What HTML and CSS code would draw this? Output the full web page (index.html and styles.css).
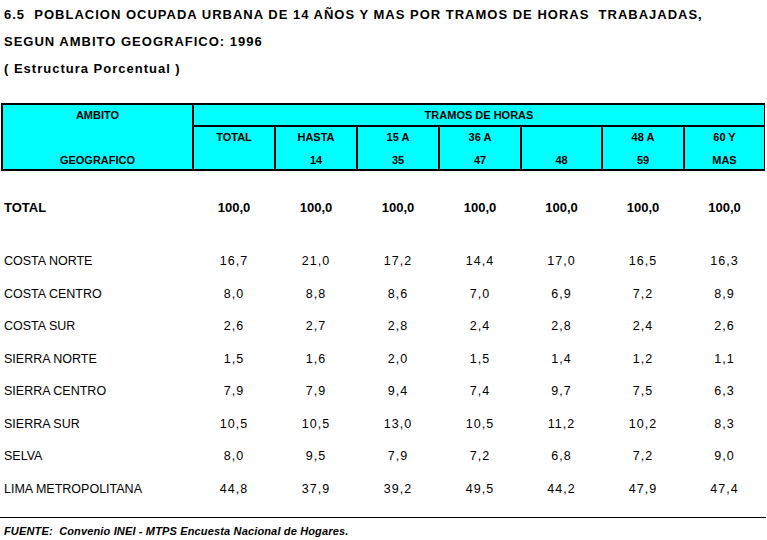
FILE: index.html
```html
<!DOCTYPE html>
<html lang="es">
<head>
<meta charset="utf-8">
<title>Poblacion ocupada urbana</title>
<link rel="stylesheet" href="styles.css">
</head>
<body>
<div class="titles">
  <div class="title-line">6.5  POBLACION OCUPADA URBANA DE 14 AÑOS Y MAS POR TRAMOS DE HORAS  TRABAJADAS,</div>
  <div class="title-line">SEGUN AMBITO GEOGRAFICO: 1996</div>
  <div class="title-line">( Estructura Porcentual )</div>
</div>

<div class="head">
  <div class="hcell ambito"><span>AMBITO</span><span>GEOGRAFICO</span></div>
  <div class="hcell tramos">TRAMOS DE HORAS</div>
  <div class="hcell two"><span>TOTAL</span><span>&nbsp;</span></div>
  <div class="hcell two"><span>HASTA</span><span>14</span></div>
  <div class="hcell two"><span>15 A</span><span>35</span></div>
  <div class="hcell two"><span>36 A</span><span>47</span></div>
  <div class="hcell two"><span>&nbsp;</span><span>48</span></div>
  <div class="hcell two"><span>48 A</span><span>59</span></div>
  <div class="hcell two"><span>60 Y</span><span>MAS</span></div>
</div>

<div class="body">
  <div class="row total">
    <div class="label">TOTAL</div>
    <div class="num">100,0</div><div class="num">100,0</div><div class="num">100,0</div><div class="num">100,0</div><div class="num">100,0</div><div class="num">100,0</div><div class="num">100,0</div>
  </div>
  <div class="spacer"></div>
  <div class="row">
    <div class="label">COSTA NORTE</div>
    <div class="num">16,7</div><div class="num">21,0</div><div class="num">17,2</div><div class="num">14,4</div><div class="num">17,0</div><div class="num">16,5</div><div class="num">16,3</div>
  </div>
  <div class="row">
    <div class="label">COSTA CENTRO</div>
    <div class="num">8,0</div><div class="num">8,8</div><div class="num">8,6</div><div class="num">7,0</div><div class="num">6,9</div><div class="num">7,2</div><div class="num">8,9</div>
  </div>
  <div class="row">
    <div class="label">COSTA SUR</div>
    <div class="num">2,6</div><div class="num">2,7</div><div class="num">2,8</div><div class="num">2,4</div><div class="num">2,8</div><div class="num">2,4</div><div class="num">2,6</div>
  </div>
  <div class="row">
    <div class="label">SIERRA NORTE</div>
    <div class="num">1,5</div><div class="num">1,6</div><div class="num">2,0</div><div class="num">1,5</div><div class="num">1,4</div><div class="num">1,2</div><div class="num">1,1</div>
  </div>
  <div class="row">
    <div class="label">SIERRA CENTRO</div>
    <div class="num">7,9</div><div class="num">7,9</div><div class="num">9,4</div><div class="num">7,4</div><div class="num">9,7</div><div class="num">7,5</div><div class="num">6,3</div>
  </div>
  <div class="row">
    <div class="label">SIERRA SUR</div>
    <div class="num">10,5</div><div class="num">10,5</div><div class="num">13,0</div><div class="num">10,5</div><div class="num">11,2</div><div class="num">10,2</div><div class="num">8,3</div>
  </div>
  <div class="row">
    <div class="label">SELVA</div>
    <div class="num">8,0</div><div class="num">9,5</div><div class="num">7,9</div><div class="num">7,2</div><div class="num">6,8</div><div class="num">7,2</div><div class="num">9,0</div>
  </div>
  <div class="row">
    <div class="label">LIMA METROPOLITANA</div>
    <div class="num">44,8</div><div class="num">37,9</div><div class="num">39,2</div><div class="num">49,5</div><div class="num">44,2</div><div class="num">47,9</div><div class="num">47,4</div>
  </div>
</div>

<div class="footer">
  <div class="source">FUENTE:  Convenio INEI - MTPS Encuesta Nacional de Hogares.</div>
</div>
</body>
</html>
```

FILE: styles.css
```css
html, body {
  margin: 0;
  padding: 0;
  background: #ffffff;
}

body {
  width: 767px;
  font-family: "Liberation Sans", Arial, sans-serif;
  color: #000000;
}

.titles {
  padding: 1px 0 0 4px;
}

.title-line {
  font-size: 13px;
  font-weight: bold;
  letter-spacing: 1px;
  line-height: 27px;
  white-space: pre;
}

/* header grid: black background with 2px gaps forms the ruling */
.head {
  margin: 21px 0 0 1px;
  width: 764px;
  box-sizing: border-box;
  display: grid;
  grid-template-columns: 189px 80px 80px 80px 80px 79px 80px 79px;
  grid-template-rows: 20px 42px;
  gap: 2px;
  padding: 2px;
  background: #000000;
}

.hcell {
  background: #00ffff;
  font-size: 11px;
  font-weight: bold;
  line-height: 13px;
  text-align: center;
}

.ambito {
  grid-column: 1;
  grid-row: 1 / span 2;
  display: flex;
  flex-direction: column;
  justify-content: space-between;
  padding: 4px 0 2px;
}

.tramos {
  grid-column: 2 / span 7;
  grid-row: 1;
  display: flex;
  align-items: center;
  justify-content: center;
  padding-top: 1px;
}

.two {
  grid-row: 2;
  display: flex;
  flex-direction: column;
  justify-content: space-between;
  padding: 4px 0 2px;
}

.body {
  margin: 20px 0 0 1px;
  width: 764px;
  box-sizing: border-box;
  padding: 0 2px;
}

.row {
  display: grid;
  grid-template-columns: 189px 80px 80px 80px 80px 79px 80px 79px;
  column-gap: 2px;
  height: 32.5px;
  align-items: center;
  font-size: 12.5px;
}

.row.total {
  height: 32px;
  font-size: 13px;
  font-weight: bold;
}

.spacer {
  height: 22px;
}

.label {
  padding-left: 1px;
  white-space: nowrap;
}

.num {
  text-align: center;
  letter-spacing: 1px;
}

.row.total .num {
  letter-spacing: 0;
}

.footer {
  margin-top: 12px;
  border-top: 1px solid #000000;
  width: 766px;
}

.source {
  padding: 7px 0 0 4px;
  font-size: 11px;
  font-weight: bold;
  font-style: italic;
  letter-spacing: 0.15px;
  line-height: 13px;
  white-space: pre;
}
```
